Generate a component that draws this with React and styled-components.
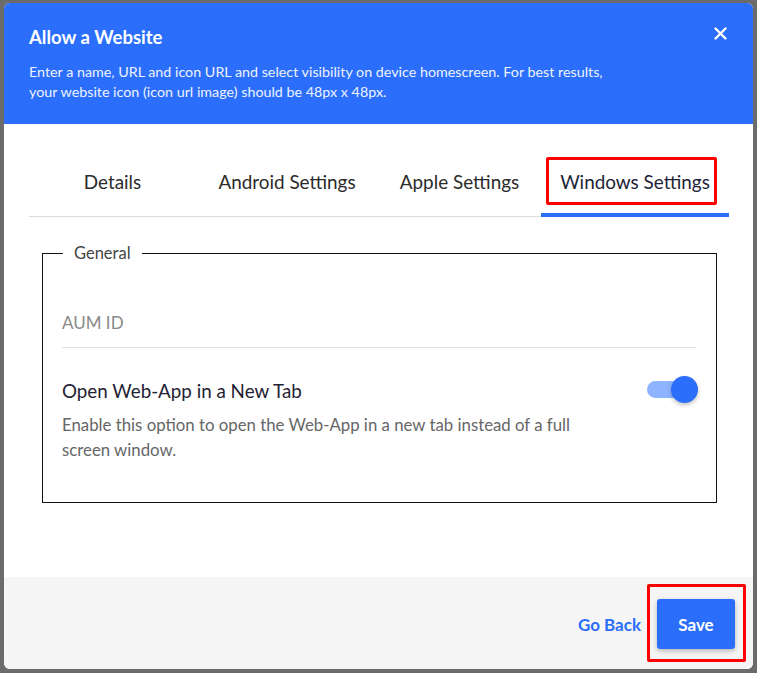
import React, { useState } from "react";
import styled, { createGlobalStyle } from "styled-components";

const GlobalStyle = createGlobalStyle`
    html, body {
        margin: 0;
        padding: 0;
        background: #6b6b6b;
        font-family: Lato, "Open Sans", sans-serif;
    }
`;

const Backdrop = styled.div`
    width: 757px;
    height: 673px;
    padding: 3px 4px 4px 4px;
    box-sizing: border-box;
`;

const Modal = styled.div`
    position: relative;
    width: 749px;
    height: 666px;
    background: #fff;
    border-radius: 6px;
    overflow: hidden;
    display: flex;
    flex-direction: column;
`;

const Header = styled.div`
    background: #2a6efb;
    color: #fff;
    padding: 21px 26px 22px 25px;
`;

const TitleRow = styled.div`
    display: flex;
    justify-content: space-between;
    align-items: center;
`;

const Title = styled.h2`
    margin: 0;
    font-size: 18.5px;
    line-height: 26px;
    font-weight: 700;
`;

const Close = styled.button`
    border: none;
    background: none;
    padding: 0;
    margin-top: -8px;
    color: #fff;
    cursor: pointer;
    display: flex;
`;

const Intro = styled.p`
    margin: 12px 0 0 0;
    font-size: 14.3px;
    line-height: 20px;
    color: #eef3ff;
`;

const Body = styled.div`
    flex: 1;
    padding: 23px 24px 0 25px;
`;

const Tabs = styled.div`
    display: flex;
    border-bottom: 1px solid #dcdcdc;
`;

const Tab = styled.div`
    position: relative;
    height: 69px;
    width: ${p => p.$w}px;
    display: flex;
    align-items: center;
    justify-content: center;
    font-size: 18.9px;
    color: ${p => p.$active ? "#1c2438" : "#2b2b2b"};
    cursor: pointer;

    &::after {
        content: "";
        position: absolute;
        left: 0;
        right: 0;
        bottom: -1px;
        height: 4px;
        background: ${p => p.$active ? "#2a6efb" : "transparent"};
    }
`;

const Highlight = styled.div`
    position: absolute;
    left: ${p => p.$x}px;
    top: ${p => p.$y}px;
    width: ${p => p.$w}px;
    height: ${p => p.$h}px;
    border: 3px solid #ff0000;
    border-radius: 2px;
    box-sizing: border-box;
    pointer-events: none;
`;

const Fieldset = styled.fieldset`
    margin: 27px 12px 0 13px;
    border: 1px solid #111;
    padding: 0 20px 40px 19px;
`;

const Legend = styled.legend`
    margin-left: 1px;
    padding: 0 11px;
    font-size: 16.5px;
    line-height: 19px;
    color: #444;
`;

const Field = styled.div`
    margin-top: 48px;
    padding-bottom: 12px;
    border-bottom: 1px solid #dedede;
    font-size: 17px;
    line-height: 24px;
    color: #8a8a8a;
`;

const OptionRow = styled.div`
    display: flex;
    justify-content: space-between;
    align-items: flex-start;
    margin-top: 30px;
`;

const OptionText = styled.div`
    max-width: 530px;
`;

const OptionTitle = styled.div`
    font-size: 18.8px;
    line-height: 26px;
    color: #1f2233;
`;

const OptionDesc = styled.div`
    margin-top: 8px;
    font-size: 16.8px;
    line-height: 25px;
    color: #666;
`;

const Switch = styled.div`
    position: relative;
    width: 51px;
    height: 27px;
    margin-top: -2px;
    margin-right: -2px;
    cursor: pointer;
`;

const Track = styled.div`
    position: absolute;
    left: 0;
    top: 5px;
    width: 42px;
    height: 17px;
    border-radius: 9px;
    background: ${p => p.$on ? "#8fb4ff" : "#c4c4c4"};
`;

const Thumb = styled.div`
    position: absolute;
    top: 0;
    left: ${p => p.$on ? 24 : 0}px;
    width: 27px;
    height: 27px;
    border-radius: 50%;
    background: ${p => p.$on ? "#2a6efb" : "#fafafa"};
    box-shadow: 0 2px 4px rgba(0, 0, 0, 0.25);
`;

const Footer = styled.div`
    height: 92px;
    background: #f5f5f5;
    display: flex;
    justify-content: flex-end;
    align-items: center;
    gap: 16px;
    padding: 0 18px 0 0;
`;

const LinkButton = styled.button`
    border: none;
    background: none;
    padding: 0;
    font-family: inherit;
    font-size: 17px;
    font-weight: 700;
    color: #2a6efb;
    margin-top: 2px;
    cursor: pointer;
`;

const SaveWrap = styled.div`
    position: relative;
    margin-top: 2px;
`;

const SaveButton = styled.button`
    width: 78px;
    height: 50px;
    border: none;
    border-radius: 3px;
    background: #2a6efb;
    color: #fff;
    font-family: inherit;
    font-size: 17px;
    font-weight: 700;
    box-shadow: 0 2px 5px rgba(0, 0, 0, 0.25);
    cursor: pointer;
`;

const tabs = [
    { label: "Details", w: 167 },
    { label: "Android Settings", w: 182 },
    { label: "Apple Settings", w: 163 },
    { label: "Windows Settings", w: 188 },
];

function App() {
    const [active, setActive] = useState(3);
    const [newTab, setNewTab] = useState(true);

    return (
        <Backdrop>
            <GlobalStyle />
            <Modal>
                <Header>
                    <TitleRow>
                        <Title>Allow a Website</Title>
                        <Close aria-label="close">
                            <svg width="13" height="13" viewBox="0 0 13 13">
                                <path d="M1.5 1.5 L11.5 11.5 M11.5 1.5 L1.5 11.5" stroke="#fff" strokeWidth="2.4" strokeLinecap="round" />
                            </svg>
                        </Close>
                    </TitleRow>
                    <Intro>
                        Enter a name, URL and icon URL and select visibility on device homescreen. For best results,<br />
                        your website icon (icon url image) should be 48px x 48px.
                    </Intro>
                </Header>

                <Body>
                    <Tabs>
                        {tabs.map((t, i) => (
                            <Tab key={t.label} $w={t.w} $active={i === active} onClick={() => setActive(i)}>
                                {t.label}
                                {i === 3 && <Highlight $x={5} $y={10} $w={171} $h={48} />}
                            </Tab>
                        ))}
                    </Tabs>

                    <Fieldset>
                        <Legend>General</Legend>
                        <Field>AUM ID</Field>
                        <OptionRow>
                            <OptionText>
                                <OptionTitle>Open Web-App in a New Tab</OptionTitle>
                                <OptionDesc>
                                    Enable this option to open the Web-App in a new tab instead of a full screen window.
                                </OptionDesc>
                            </OptionText>
                            <Switch onClick={() => setNewTab(!newTab)}>
                                <Track $on={newTab} />
                                <Thumb $on={newTab} />
                            </Switch>
                        </OptionRow>
                    </Fieldset>
                </Body>

                <Footer>
                    <LinkButton>Go Back</LinkButton>
                    <SaveWrap>
                        <SaveButton>Save</SaveButton>
                        <Highlight $x={-10} $y={-15} $w={99} $h={78} />
                    </SaveWrap>
                </Footer>
            </Modal>
        </Backdrop>
    );
}

export default App;
